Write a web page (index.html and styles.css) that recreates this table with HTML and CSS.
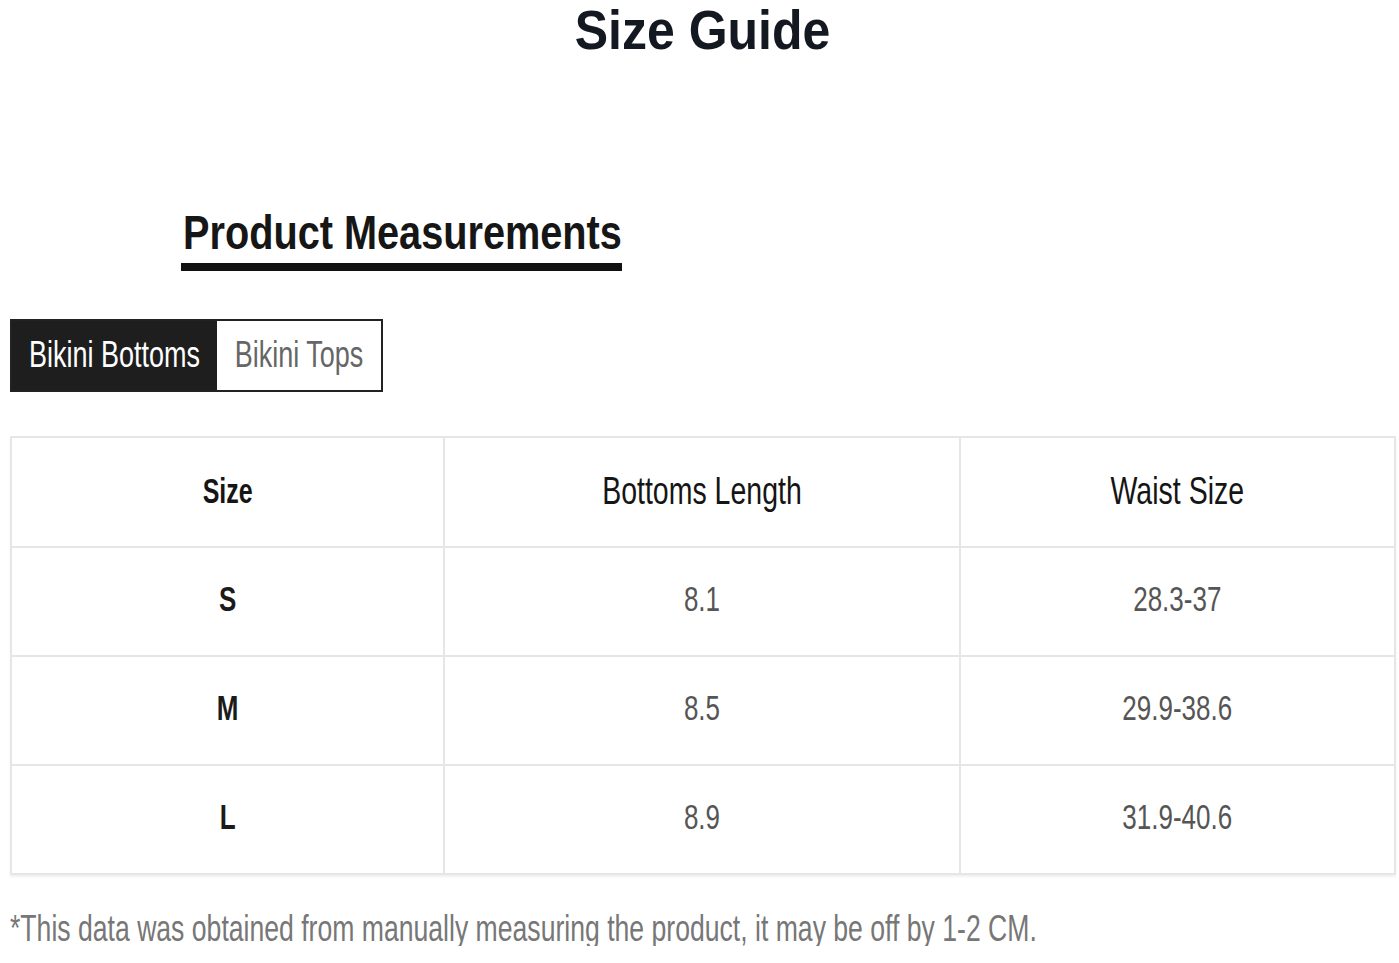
FILE: index.html
```html
<!DOCTYPE html>
<html>
<head>
<meta charset="utf-8">
<link rel="stylesheet" href="styles.css">
</head>
<body>
<div class="page">
  <h1 class="title"><span class="tall t-title">Size Guide</span></h1>
  <div class="section-head">
    <h2 class="measure"><span class="tall t-measure">Product Measurements</span></h2>
  </div>
  <div class="tabs">
    <div class="tab active"><span class="tall t-tab">Bikini Bottoms</span></div>
    <div class="tab"><span class="tall t-tab">Bikini Tops</span></div>
  </div>
  <table class="sizes">
    <colgroup>
      <col class="c1"><col class="c2"><col class="c3">
    </colgroup>
    <tr class="head">
      <td><span class="tall t-cell bold">Size</span></td>
      <td><span class="tall t-cell">Bottoms Length</span></td>
      <td><span class="tall t-cell">Waist Size</span></td>
    </tr>
    <tr>
      <td><span class="tall t-cell bold dark">S</span></td>
      <td><span class="tall t-cell">8.1</span></td>
      <td><span class="tall t-cell">28.3-37</span></td>
    </tr>
    <tr>
      <td><span class="tall t-cell bold dark">M</span></td>
      <td><span class="tall t-cell">8.5</span></td>
      <td><span class="tall t-cell">29.9-38.6</span></td>
    </tr>
    <tr>
      <td><span class="tall t-cell bold dark">L</span></td>
      <td><span class="tall t-cell">8.9</span></td>
      <td><span class="tall t-cell">31.9-40.6</span></td>
    </tr>
  </table>
  <p class="note"><span class="tall t-note">*This data was obtained from manually measuring the product, it may be off by 1-2 CM.</span></p>
</div>
</body>
</html>
```
FILE: styles.css
```css
html, body {
  margin: 0;
  padding: 0;
  background: #ffffff;
}
.page {
  width: 1399px;
  font-family: "Liberation Sans", Arial, sans-serif;
  color: #1a1a1a;
}
.tall {
  display: inline-block;
  transform-origin: 50% 50%;
}
.title {
  margin: 0;
  padding-left: 6px;
  height: 60px;
  line-height: 60px;
  text-align: center;
  font-size: 50px;
  font-weight: 700;
  color: #141820;
}
.t-title { transform: scaleY(1.12); }
.section-head {
  padding-top: 146px;
  padding-left: 181px;
}
.measure {
  display: inline-block;
  margin: 0;
  font-size: 39.7px;
  font-weight: 700;
  line-height: 52px;
  color: #161616;
  border-bottom: 8px solid #111;
  padding: 0 0 5px 2px;
}
.t-measure { transform: scaleY(1.23); }
.tabs {
  display: flex;
  margin: 48px 0 0 10px;
  width: 369px;
  height: 69px;
  border: 2px solid #222;
}
.tab {
  display: flex;
  align-items: center;
  justify-content: center;
  width: 165px;
  font-size: 27px;
  color: #666;
  background: #fff;
}
.tab.active {
  width: 206px;
  background: #1e1e1e;
  color: #fff;
}
.t-tab { transform: scaleY(1.35); }
.sizes {
  margin: 44px 0 0 10px;
  width: 1386px;
  border-collapse: collapse;
  border: 2px solid #e6e6e6;
  box-shadow: 0 2px 2px rgba(0,0,0,0.06);
}
.c1 { width: 434px; }
.c2 { width: 516px; }
.c3 { width: 436px; }
.sizes td {
  border: 2px solid #e6e6e6;
  height: 107px;
  padding: 0;
  text-align: center;
  vertical-align: middle;
  font-size: 26px;
  color: #555;
}
.sizes tr.head td {
  height: 108px;
  font-size: 28.5px;
  color: #151515;
}
.sizes tr.head td .bold { font-size: 25px; }
.t-cell { transform: translateY(-2px) scaleY(1.38); }
.bold { font-weight: 700; }
.dark { color: #1b1b1b; }
.note {
  margin: 35px 0 0 10px;
  font-size: 26.6px;
  line-height: 36px;
  color: #777;
}
.t-note { transform: scaleY(1.42); transform-origin: 0 50%; }
```
